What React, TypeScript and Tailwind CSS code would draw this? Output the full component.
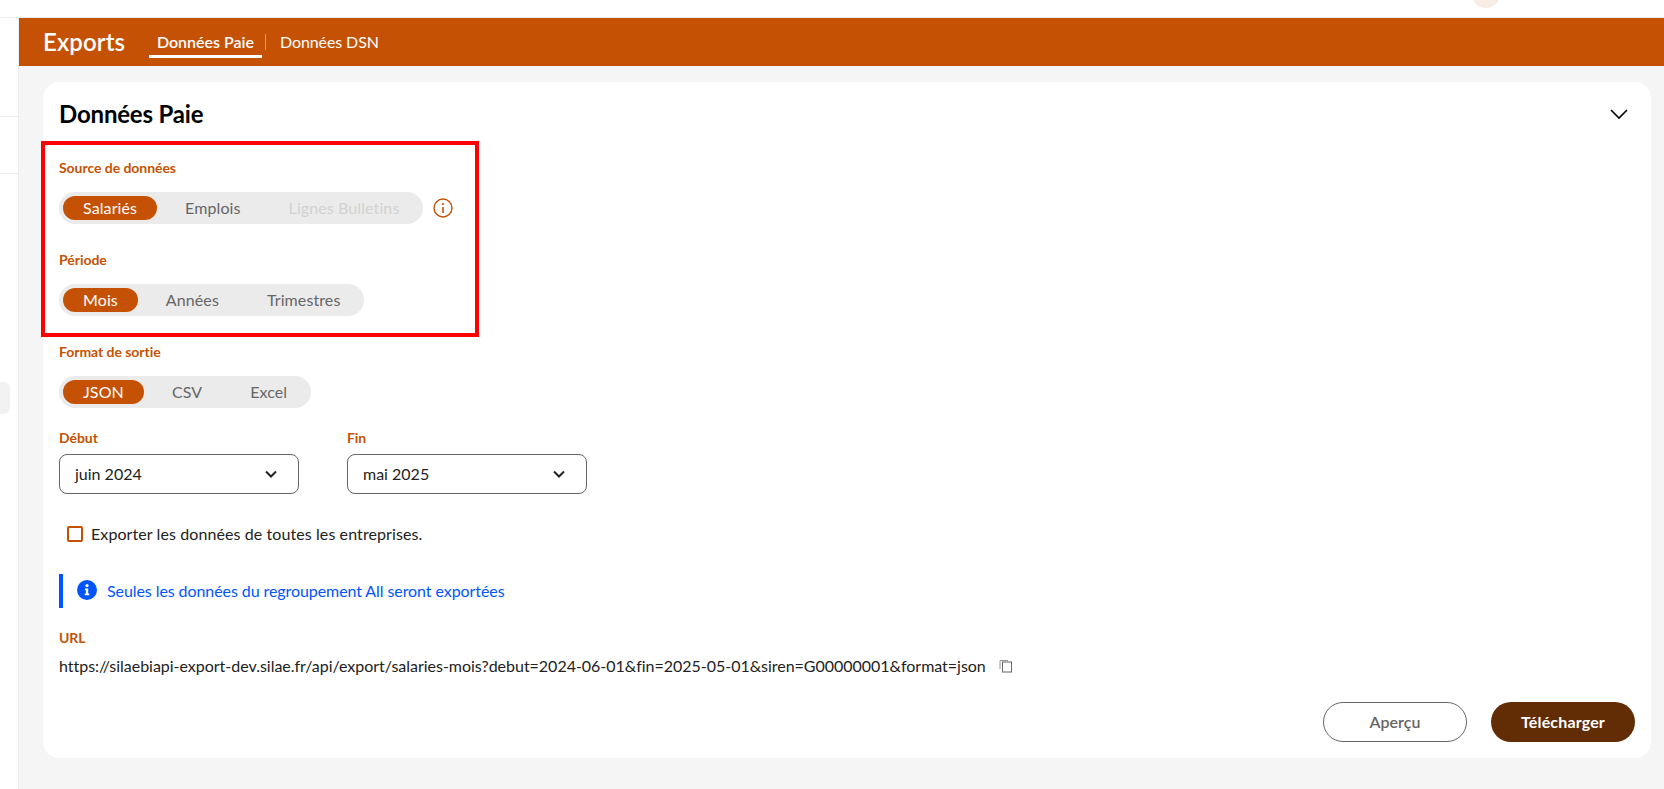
import React from "react";

function Segmented({ items, disabled = [] }: { items: string[]; disabled?: string[] }) {
  return (
    <div className="flex h-8 w-fit items-center gap-2 rounded-full bg-[#ebebeb] p-1 tracking-[0.1px]">
      {items.map((item, i) => (
        <div
          key={item}
          className={
            i === 0
              ? "flex h-6 items-center rounded-full bg-[#c55204] px-5 text-base text-white"
              : disabled.includes(item)
                ? "flex h-6 items-center rounded-full px-5 text-base text-[#d2d2d2]"
                : "flex h-6 items-center rounded-full px-5 text-base text-[#666666]"
          }
        >
          {item}
        </div>
      ))}
    </div>
  );
}

function Label({ children }: { children: React.ReactNode }) {
  return <div className="h-5 text-sm leading-[18px] font-bold tracking-[-0.05px] text-[#c55204]">{children}</div>;
}

function SelectBox({ value }: { value: string }) {
  return (
    <div className="mt-[5px] flex h-10 w-[240px] items-center justify-between rounded-lg border border-[#666666] bg-white pr-[20px] pl-[15px] text-base text-[#222222]">
      <span>{value}</span>
      <svg width="12" height="8" viewBox="0 0 12 8" fill="none" className="mr-[1px]">
        <path d="M1 1.5L6 6.5L11 1.5" stroke="#222222" strokeWidth="2" />
      </svg>
    </div>
  );
}

export default function App() {
  return (
    <div className="relative flex h-[789px] w-[1664px] flex-col overflow-hidden bg-white [font-family:Lato,sans-serif]">
      <div className="relative h-[18px] shrink-0 border-b border-[#ececec] bg-white">
        <div className="absolute top-[-20px] left-[1472px] h-[28px] w-[28px] rounded-full bg-[#f7ede6]" />
      </div>
      <div className="flex min-h-0 flex-1">
        <aside className="flex w-[19px] shrink-0 flex-col border-r border-[#ececec] bg-white">
          <div className="mt-[98px] h-px w-full bg-[#ececec]" />
          <div className="mt-[56px] h-px w-full bg-[#ececec]" />
          <div className="mt-[208px] h-8 w-[10px] rounded-r-md bg-[#f2f2f2]" />
        </aside>
        <main className="flex min-w-0 flex-1 flex-col bg-[#f5f5f5]">
          <header className="flex h-12 shrink-0 items-center bg-[#c55204] pl-[24px] text-white">
            <h1 className="w-[106px] text-2xl leading-8 font-semibold tracking-[0.1px]">Exports</h1>
            <div className="relative flex h-12 w-[113px] items-center justify-center text-base font-semibold">
              Données Paie
              <div className="absolute bottom-[8px] left-0 h-[3px] w-[113px] bg-white" />
            </div>
            <div className="mx-[3px] h-4 w-px bg-[#e59a66]" />
            <div className="ml-[11px] text-base tracking-[-0.1px]">Données DSN</div>
          </header>
          <div className="pt-4 pr-[13px] pb-[31px] pl-[24px]">
            <section className="rounded-2xl bg-white px-4 pt-4 pb-4">
              <div className="mb-[29px] flex h-8 items-center justify-between">
                <h2 className="text-2xl font-bold tracking-[-0.18px] text-black">Données Paie</h2>
                <svg width="18" height="11" viewBox="0 0 18 11" fill="none" className="mr-[7px]">
                  <path d="M1 1L9 9L17 1" stroke="#000000" strokeWidth="1.6" />
                </svg>
              </div>

              <Label>Source de données</Label>
              <div className="mt-[13px] flex items-center gap-[10px]">
                <Segmented items={["Salariés", "Emplois", "Lignes Bulletins"]} disabled={["Lignes Bulletins"]} />
                <svg width="20" height="20" viewBox="0 0 20 20" fill="none">
                  <circle cx="10" cy="10" r="9" stroke="#c55204" strokeWidth="1.4" />
                  <circle cx="10" cy="6" r="1.1" fill="#c55204" />
                  <path d="M10 9V15" stroke="#c55204" strokeWidth="1.6" />
                </svg>
              </div>

              <div className="mt-[27px]">
                <Label>Période</Label>
              </div>
              <div className="mt-[13px]">
                <Segmented items={["Mois", "Années", "Trimestres"]} />
              </div>

              <div className="mt-[27px]">
                <Label>Format de sortie</Label>
              </div>
              <div className="mt-[13px]">
                <Segmented items={["JSON", "CSV", "Excel"]} />
              </div>

              <div className="mt-[21px] flex gap-12">
                <div>
                  <Label>Début</Label>
                  <SelectBox value="juin 2024" />
                </div>
                <div>
                  <Label>Fin</Label>
                  <SelectBox value="mai 2025" />
                </div>
              </div>

              <div className="mt-[30px] flex h-5 items-center pl-2">
                <div className="h-4 w-4 rounded-[2px] border-2 border-[#c55204] bg-white" />
                <span className="ml-2 text-base tracking-[0.09px] text-[#222222]">Exporter les données de toutes les entreprises.</span>
              </div>

              <div className="mt-[30px] flex h-[34px] items-center border-l-4 border-[#0055ff] pl-[14px] text-base text-[#0055ff]">
                <svg width="20" height="20" viewBox="0 0 20 20" className="mb-[3px]">
                  <circle cx="10" cy="10" r="10" fill="#0055ff" />
                  <circle cx="10" cy="5.6" r="1.6" fill="#ffffff" />
                  <path d="M8 8.6H11.2V13.6H12.3V15.2H7.8V13.6H8.9V10.2H8Z" fill="#ffffff" />
                </svg>
                <span className="ml-[10px] tracking-[-0.08px]">Seules les données du regroupement All seront exportées</span>
              </div>

              <div className="mt-[21px]">
                <Label>URL</Label>
              </div>
              <div className="mt-[7px] flex h-5 items-center text-base text-[#222222]">
                <span className="tracking-[-0.02px]">https://silaebiapi-export-dev.silae.fr/api/export/salaries-mois?debut=2024-06-01&amp;fin=2025-05-01&amp;siren=G00000001&amp;format=json</span>
                <svg width="14" height="14" viewBox="0 0 14 14" fill="none" className="ml-[13px]">
                  <rect x="3.5" y="3" width="9" height="10" stroke="#666666" />
                  <path d="M1 10V1.5H9" stroke="#999999" />
                </svg>
              </div>

              <div className="mt-[26px] flex justify-end gap-6">
                <button className="h-10 w-[144px] rounded-[20px] border border-[#666666] bg-white text-base font-semibold text-[#666666]">Aperçu</button>
                <button className="h-10 w-[144px] rounded-[20px] bg-[#622c05] text-base font-bold tracking-[0.15px] text-white">Télécharger</button>
              </div>
            </section>
          </div>
        </main>
      </div>
      <div className="absolute top-[141px] left-[41px] h-[196px] w-[438px] border-4 border-[#ff0000]" />
    </div>
  );
}
